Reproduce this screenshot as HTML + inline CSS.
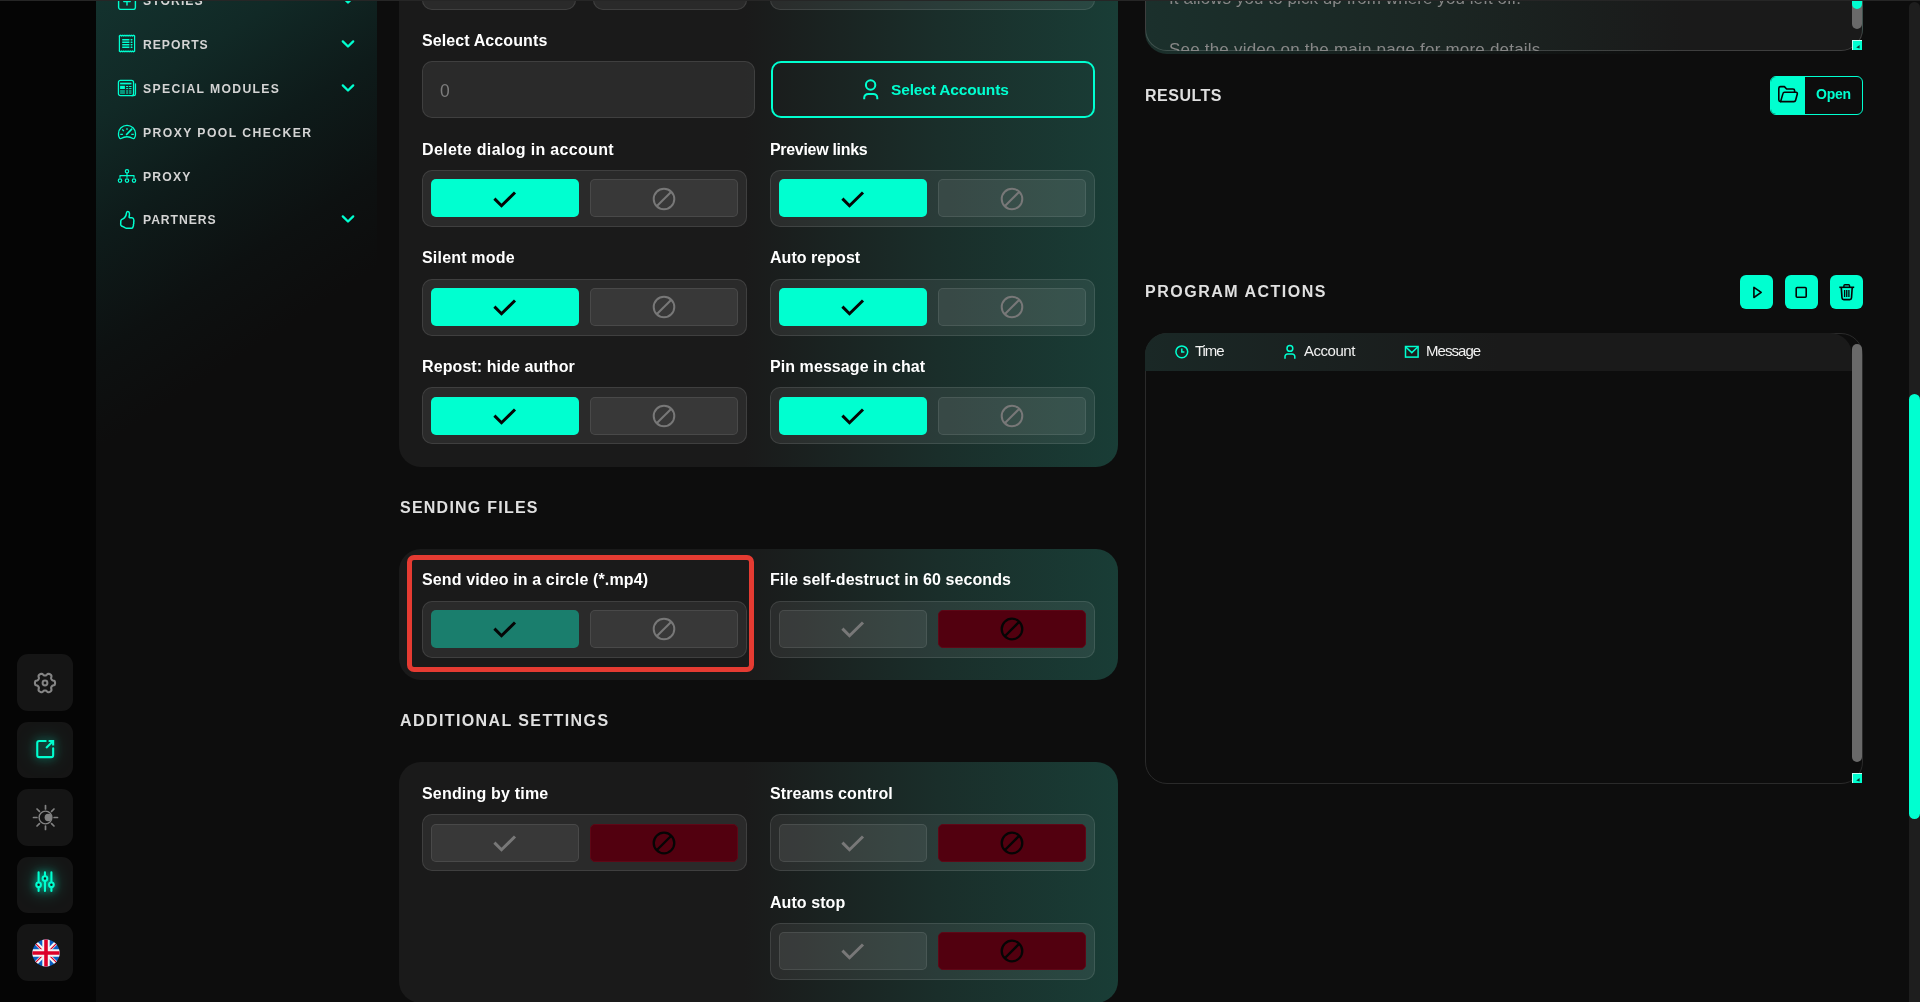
<!DOCTYPE html>
<html lang="en">
<head>
<meta charset="utf-8">
<title>Sender</title>
<style>
*{box-sizing:border-box;margin:0;padding:0}
html,body{width:1920px;height:1002px;overflow:hidden;background:#0d0d0d}
body{position:relative;font-family:"Liberation Sans",sans-serif;color:#fff}
.a{position:absolute}
.t{position:absolute;white-space:nowrap;will-change:transform}
#strip{left:0;top:0;width:96px;height:1002px;background:#050505}
#side{left:96px;top:0;width:281px;height:1002px;background:linear-gradient(147deg,#13322e 0%,#112926 10%,#0e1b1a 20%,#0d1111 30%,#0d0d0d 38%)}
#topline{left:0;top:0;width:1920px;height:1px;background:#262626;z-index:50}
.ibtn{left:17px;width:56px;height:57px;border-radius:11px;background:#151515;overflow:hidden}
.nav{font-weight:bold;font-size:12.2px;color:#d4d4d4;line-height:14px}
.panel{left:399px;width:719px;border-radius:22px;background:linear-gradient(90deg,#1a1a1a 0%,#1a1a1a 48%,#1a2e2a 75%,#193d36 100%)}
.lbl{font-weight:bold;font-size:16px;line-height:20px;color:#fff}
.sec{font-weight:bold;font-size:16px;line-height:18px;color:#e0e0e0}
.tg{width:325px;height:57px;border-radius:10px;border:1px solid rgba(255,255,255,.1);background:rgba(255,255,255,.07)}
.tb{position:absolute;top:8px;width:148px;height:38px;border-radius:5px}
.tb.l{left:8px}.tb.r{left:167px}
.tb svg{position:absolute;left:50%;top:50%}
.on{background:#00ffd0}
.dim{background:#1a7e6d}
.off{background:rgba(255,255,255,.065);border:1px solid rgba(255,255,255,.09)}
.red{background:#52000f;border:1px solid #5e0716}
.abtn{top:275px;width:33px;height:34px;border-radius:6px;background:#00ffd0}
.th{font-size:15px;line-height:18px;color:#f2f2f2}
</style>
</head>
<body>
<div id="strip" class="a"></div><div id="side" class="a"></div>
<main>
<div class="a panel" style="top:-40px;height:507px"></div>
<div class="a panel" style="top:549px;height:131px"></div>
<div class="a panel" style="top:762px;height:241px"></div>
<div class="a" style="left:422px;top:-40px;width:154px;height:50px;border-radius:10px;border:1px solid rgba(255,255,255,.1);background:rgba(255,255,255,.07)"></div>
<div class="a" style="left:593px;top:-40px;width:154px;height:50px;border-radius:10px;border:1px solid rgba(255,255,255,.1);background:rgba(255,255,255,.07)"></div>
<div class="a" style="left:770px;top:-40px;width:325px;height:50px;border-radius:10px;border:1px solid rgba(255,255,255,.1);background:rgba(255,255,255,.07)"></div>
<div class="t lbl" style="left:422px;top:31px;letter-spacing:0.101px;">Select Accounts</div>
<div class="a" style="left:422px;top:61px;width:333px;height:57px;border-radius:10px;border:1px solid rgba(255,255,255,.1);background:rgba(255,255,255,.07)"></div>
<div class="t" style="left:440px;top:81px;font-size:17.5px;line-height:20px;color:#7d7d7d">0</div>
<div class="a" style="left:771px;top:61px;width:324px;height:57px;border-radius:10px;border:2px solid #00ffd0"></div>
<div class="t " style="left:890.5px;top:80px;letter-spacing:-0.159px;font-weight:bold;font-size:15.5px;line-height:20px;color:#00ffd0">Select Accounts</div>
<svg class="a" style="left:859px;top:77px" width="24" height="24" viewBox="0 0 24 24" fill="none" stroke="#00ffd0" stroke-width="2"><circle cx="11.6" cy="8" r="4.7"/><path d="M5.2 22.3 V20.9 a4 4 0 0 1 4 -4 h5.1 a4 4 0 0 1 4 4 v1.4"/></svg>
<div class="t lbl" style="left:422px;top:140px;letter-spacing:0.329px;">Delete dialog in account</div>
<div class="t lbl" style="left:770px;top:140px;letter-spacing:-0.308px;">Preview links</div>
<div class="a tg" style="left:422px;top:170px"><div class="tb l on"><svg width="30" height="24" viewBox="0 0 30 24" style="margin:-11.2px 0 0 -15px"><path d="M4.4 11.6 L11.5 18.7 L25 5.5" fill="none" stroke="#050505" stroke-width="3.0" stroke-linecap="butt" stroke-linejoin="miter"/></svg></div><div class="tb r off"><svg width="26" height="26" viewBox="0 0 26 26" style="margin:-12.2px 0 0 -13px"><circle cx="13" cy="13" r="10.3" fill="none" stroke="#787878" stroke-width="2.0"/><path d="M5.7 20.3 L20.3 5.7" stroke="#787878" stroke-width="2.0"/></svg></div></div>
<div class="a tg" style="left:770px;top:170px"><div class="tb l on"><svg width="30" height="24" viewBox="0 0 30 24" style="margin:-11.2px 0 0 -15px"><path d="M4.4 11.6 L11.5 18.7 L25 5.5" fill="none" stroke="#050505" stroke-width="3.0" stroke-linecap="butt" stroke-linejoin="miter"/></svg></div><div class="tb r off"><svg width="26" height="26" viewBox="0 0 26 26" style="margin:-12.2px 0 0 -13px"><circle cx="13" cy="13" r="10.3" fill="none" stroke="#787878" stroke-width="2.0"/><path d="M5.7 20.3 L20.3 5.7" stroke="#787878" stroke-width="2.0"/></svg></div></div>
<div class="t lbl" style="left:422px;top:248px;letter-spacing:0.191px;">Silent mode</div>
<div class="t lbl" style="left:770px;top:248px;letter-spacing:0.042px;">Auto repost</div>
<div class="a tg" style="left:422px;top:279px"><div class="tb l on"><svg width="30" height="24" viewBox="0 0 30 24" style="margin:-11.9px 0 0 -15px"><path d="M4.4 11.6 L11.5 18.7 L25 5.5" fill="none" stroke="#050505" stroke-width="3.0" stroke-linecap="butt" stroke-linejoin="miter"/></svg></div><div class="tb r off"><svg width="26" height="26" viewBox="0 0 26 26" style="margin:-12.9px 0 0 -13px"><circle cx="13" cy="13" r="10.3" fill="none" stroke="#787878" stroke-width="2.0"/><path d="M5.7 20.3 L20.3 5.7" stroke="#787878" stroke-width="2.0"/></svg></div></div>
<div class="a tg" style="left:770px;top:279px"><div class="tb l on"><svg width="30" height="24" viewBox="0 0 30 24" style="margin:-11.9px 0 0 -15px"><path d="M4.4 11.6 L11.5 18.7 L25 5.5" fill="none" stroke="#050505" stroke-width="3.0" stroke-linecap="butt" stroke-linejoin="miter"/></svg></div><div class="tb r off"><svg width="26" height="26" viewBox="0 0 26 26" style="margin:-12.9px 0 0 -13px"><circle cx="13" cy="13" r="10.3" fill="none" stroke="#787878" stroke-width="2.0"/><path d="M5.7 20.3 L20.3 5.7" stroke="#787878" stroke-width="2.0"/></svg></div></div>
<div class="t lbl" style="left:422px;top:357px;letter-spacing:0.094px;">Repost: hide author</div>
<div class="t lbl" style="left:770px;top:357px;letter-spacing:0.07px;">Pin message in chat</div>
<div class="a tg" style="left:422px;top:387px"><div style="top:9px" class="tb l on"><svg width="30" height="24" viewBox="0 0 30 24" style="margin:-11.9px 0 0 -15px"><path d="M4.4 11.6 L11.5 18.7 L25 5.5" fill="none" stroke="#050505" stroke-width="3.0" stroke-linecap="butt" stroke-linejoin="miter"/></svg></div><div style="top:9px" class="tb r off"><svg width="26" height="26" viewBox="0 0 26 26" style="margin:-12.9px 0 0 -13px"><circle cx="13" cy="13" r="10.3" fill="none" stroke="#787878" stroke-width="2.0"/><path d="M5.7 20.3 L20.3 5.7" stroke="#787878" stroke-width="2.0"/></svg></div></div>
<div class="a tg" style="left:770px;top:387px"><div style="top:9px" class="tb l on"><svg width="30" height="24" viewBox="0 0 30 24" style="margin:-11.9px 0 0 -15px"><path d="M4.4 11.6 L11.5 18.7 L25 5.5" fill="none" stroke="#050505" stroke-width="3.0" stroke-linecap="butt" stroke-linejoin="miter"/></svg></div><div style="top:9px" class="tb r off"><svg width="26" height="26" viewBox="0 0 26 26" style="margin:-12.9px 0 0 -13px"><circle cx="13" cy="13" r="10.3" fill="none" stroke="#787878" stroke-width="2.0"/><path d="M5.7 20.3 L20.3 5.7" stroke="#787878" stroke-width="2.0"/></svg></div></div>
<div class="t sec" style="left:399.5px;top:499px;letter-spacing:1.234px;">SENDING FILES</div>
<div class="t lbl" style="left:422px;top:570px;letter-spacing:0.128px;">Send video in a circle (*.mp4)</div>
<div class="t lbl" style="left:770px;top:570px;letter-spacing:0.087px;">File self-destruct in 60 seconds</div>
<div class="a tg" style="left:422px;top:601px"><div class="tb l dim"><svg width="30" height="24" viewBox="0 0 30 24" style="margin:-11.9px 0 0 -15px"><path d="M4.4 11.6 L11.5 18.7 L25 5.5" fill="none" stroke="#050505" stroke-width="3.0" stroke-linecap="butt" stroke-linejoin="miter"/></svg></div><div class="tb r off"><svg width="26" height="26" viewBox="0 0 26 26" style="margin:-12.9px 0 0 -13px"><circle cx="13" cy="13" r="10.3" fill="none" stroke="#787878" stroke-width="2.0"/><path d="M5.7 20.3 L20.3 5.7" stroke="#787878" stroke-width="2.0"/></svg></div></div>
<div class="a tg" style="left:770px;top:601px"><div class="tb l off"><svg width="30" height="24" viewBox="0 0 30 24" style="margin:-11.9px 0 0 -15px"><path d="M4.4 11.6 L11.5 18.7 L25 5.5" fill="none" stroke="#787878" stroke-width="3.0" stroke-linecap="butt" stroke-linejoin="miter"/></svg></div><div class="tb r red"><svg width="26" height="26" viewBox="0 0 26 26" style="margin:-13.2px 0 0 -13px"><circle cx="13" cy="13" r="10.3" fill="none" stroke="#050505" stroke-width="2.3"/><path d="M5.7 20.3 L20.3 5.7" stroke="#050505" stroke-width="2.3"/></svg></div></div>
<div class="a" style="left:407px;top:555px;width:347px;height:117px;border:5px solid #e53b32;border-radius:7px"></div>
<div class="t sec" style="left:399.5px;top:712px;letter-spacing:1.404px;">ADDITIONAL SETTINGS</div>
<div class="t lbl" style="left:422px;top:784px;letter-spacing:0.187px;">Sending by time</div>
<div class="t lbl" style="left:770px;top:784px;letter-spacing:0.063px;">Streams control</div>
<div class="a tg" style="left:422px;top:814px"><div style="top:9px" class="tb l off"><svg width="30" height="24" viewBox="0 0 30 24" style="margin:-11.9px 0 0 -15px"><path d="M4.4 11.6 L11.5 18.7 L25 5.5" fill="none" stroke="#787878" stroke-width="3.0" stroke-linecap="butt" stroke-linejoin="miter"/></svg></div><div style="top:9px" class="tb r red"><svg width="26" height="26" viewBox="0 0 26 26" style="margin:-13.2px 0 0 -13px"><circle cx="13" cy="13" r="10.3" fill="none" stroke="#050505" stroke-width="2.3"/><path d="M5.7 20.3 L20.3 5.7" stroke="#050505" stroke-width="2.3"/></svg></div></div>
<div class="a tg" style="left:770px;top:814px"><div style="top:9px" class="tb l off"><svg width="30" height="24" viewBox="0 0 30 24" style="margin:-11.9px 0 0 -15px"><path d="M4.4 11.6 L11.5 18.7 L25 5.5" fill="none" stroke="#787878" stroke-width="3.0" stroke-linecap="butt" stroke-linejoin="miter"/></svg></div><div style="top:9px" class="tb r red"><svg width="26" height="26" viewBox="0 0 26 26" style="margin:-13.2px 0 0 -13px"><circle cx="13" cy="13" r="10.3" fill="none" stroke="#050505" stroke-width="2.3"/><path d="M5.7 20.3 L20.3 5.7" stroke="#050505" stroke-width="2.3"/></svg></div></div>
<div class="t lbl" style="left:770px;top:893px;letter-spacing:0.068px;">Auto stop</div>
<div class="a tg" style="left:770px;top:923px"><div class="tb l off"><svg width="30" height="24" viewBox="0 0 30 24" style="margin:-11.9px 0 0 -15px"><path d="M4.4 11.6 L11.5 18.7 L25 5.5" fill="none" stroke="#787878" stroke-width="3.0" stroke-linecap="butt" stroke-linejoin="miter"/></svg></div><div class="tb r red"><svg width="26" height="26" viewBox="0 0 26 26" style="margin:-13.2px 0 0 -13px"><circle cx="13" cy="13" r="10.3" fill="none" stroke="#050505" stroke-width="2.3"/><path d="M5.7 20.3 L20.3 5.7" stroke="#050505" stroke-width="2.3"/></svg></div></div>
</main>
<nav>
<div class="t nav" style="left:142.8px;top:-5.6px;letter-spacing:1.07px;">STORIES</div>
<svg class="a" style="left:339px;top:-6.3px" width="18" height="13" viewBox="0 0 18 13"><path d="M3.8 3.4 L9 8.5 L14.2 3.4" fill="none" stroke="#00ffd0" stroke-width="2.3" stroke-linecap="round" stroke-linejoin="round"/></svg>
<div class="t nav" style="left:142.8px;top:38.4px;letter-spacing:0.963px;">REPORTS</div>
<svg class="a" style="left:339px;top:37.7px" width="18" height="13" viewBox="0 0 18 13"><path d="M3.8 3.4 L9 8.5 L14.2 3.4" fill="none" stroke="#00ffd0" stroke-width="2.3" stroke-linecap="round" stroke-linejoin="round"/></svg>
<div class="t nav" style="left:142.8px;top:82.4px;letter-spacing:1.362px;">SPECIAL MODULES</div>
<svg class="a" style="left:339px;top:81.7px" width="18" height="13" viewBox="0 0 18 13"><path d="M3.8 3.4 L9 8.5 L14.2 3.4" fill="none" stroke="#00ffd0" stroke-width="2.3" stroke-linecap="round" stroke-linejoin="round"/></svg>
<div class="t nav" style="left:142.8px;top:126.4px;letter-spacing:1.423px;">PROXY POOL CHECKER</div>
<div class="t nav" style="left:142.8px;top:170.4px;letter-spacing:1.182px;">PROXY</div>
<div class="t nav" style="left:142.8px;top:213.4px;letter-spacing:0.923px;">PARTNERS</div>
<svg class="a" style="left:339px;top:212.7px" width="18" height="13" viewBox="0 0 18 13"><path d="M3.8 3.4 L9 8.5 L14.2 3.4" fill="none" stroke="#00ffd0" stroke-width="2.3" stroke-linecap="round" stroke-linejoin="round"/></svg>
<svg class="a" style="left:117px;top:-10px" width="20" height="20" viewBox="0 0 20 20" fill="none" stroke="#00ffd0" stroke-width="1.2" stroke-linecap="round" stroke-linejoin="round"><rect x="1.6" y="1.6" width="16.8" height="17.8" rx="2.2" stroke-width="1.4"/><path d="M10 6.5 v8.6 M6.8 11.5 h6.4" stroke-width="1.4"/></svg>
<svg class="a" style="left:117px;top:33.4px" width="20" height="20" viewBox="0 0 20 20" fill="none" stroke="#00ffd0" stroke-width="1.2" stroke-linecap="round" stroke-linejoin="round"><path d="M2.4 3 l.95 -.9 l.95 .9 l.95 -.9 l.95 .9 l.95 -.9 l.95 .9 l.95 -.9 l.95 .9 l.95 -.9 l.95 .9 l.95 -.9 l.95 .9 l.95 -.9 l.95 .9 l.95 -.9 l.95 .9"/><path d="M2.4 18 l.95 .9 l.95 -.9 l.95 .9 l.95 -.9 l.95 .9 l.95 -.9 l.95 .9 l.95 -.9 l.95 .9 l.95 -.9 l.95 .9 l.95 -.9 l.95 .9 l.95 -.9 l.95 .9 l.95 -.9"/><path d="M2.4 3 V18 M17.6 3 V18"/><path d="M5.2 6.7 h7.2 M5.2 9.2 h7.2 M5.2 11.7 h7.2 M5.2 14.2 h7.2" stroke-width="1.6" stroke-linecap="butt"/><path d="M14.2 6.7 h.7 M14.2 9.2 h.7 M14.2 11.7 h.7 M14.2 14.2 h.7" stroke-width="1.4"/></svg>
<svg class="a" style="left:117px;top:78px" width="20" height="20" viewBox="0 0 20 20" fill="none" stroke="#00ffd0" stroke-width="1.2" stroke-linecap="round" stroke-linejoin="round"><rect x="1.45" y="2.45" width="15.1" height="15.2" rx="2" stroke-width="1.3"/><path d="M18.45 5.8 V16 a1.7 1.7 0 0 1 -1.7 1.7 H15" stroke-width="1.3"/><g stroke="none" fill="#00ffd0"><rect x="3.1" y="4.7" width="11.4" height="1.7"/><rect x="3.1" y="7.8" width="4.8" height="3.2"/><rect x="3.1" y="12" width="4.8" height="4" opacity=".5"/><rect x="9.1" y="8" width="2.1" height="1"/><rect x="12.1" y="8" width="2.4" height="1"/><rect x="9.1" y="10.1" width="2.1" height="1"/><rect x="12.1" y="10.1" width="2.4" height="1"/><rect x="9.1" y="12" width="2.1" height="4" opacity=".5"/><rect x="12.1" y="12" width="2.4" height="4" opacity=".5"/></g></svg>
<svg class="a" style="left:117px;top:122px" width="20" height="20" viewBox="0 0 20 20" fill="none" stroke="#00ffd0" stroke-width="1.2" stroke-linecap="round" stroke-linejoin="round"><path d="M2.6 16.2 C1.2 14 1.4 12.2 1.5 11.6 A8.5 8.2 0 0 1 18.5 11.6 C18.6 12.2 18.8 14 17.4 16.2 C17 16.8 16.4 16.7 16 16.5 C12 14.2 8 14.2 4 16.5 C3.6 16.7 3 16.8 2.6 16.2 Z" stroke-width="1.3"/><path d="M9.6 12.5 L14.7 7.1" stroke-width="1.7"/><path d="M10 6.3 V7.7" stroke-width="1.5" stroke-linecap="butt"/><path d="M5.3 7.4 L6.8 9.1 M3.3 12.4 H5.9 M14.3 12.4 H16.8" stroke-width="1.4" stroke-linecap="butt"/></svg>
<svg class="a" style="left:117px;top:166px" width="20" height="20" viewBox="0 0 20 20" fill="none" stroke="#00ffd0" stroke-width="1.2" stroke-linecap="round" stroke-linejoin="round"><circle cx="10" cy="5.3" r="1.7"/><path d="M10 7 v2.6 M3 11.3 v-1.7 h14 v1.7 M10 9.6 v1.7"/><circle cx="3" cy="14.6" r="1.7"/><circle cx="10" cy="14.6" r="1.7"/><circle cx="17" cy="14.6" r="1.7"/></svg>
<svg class="a" style="left:117px;top:210px" width="20" height="20" viewBox="0 0 20 20" fill="none" stroke="#00ffd0" stroke-width="1.2" stroke-linecap="round" stroke-linejoin="round"><path d="M10.6 1.4 C9.8 1.4 9.5 2.2 9.4 3.4 C9.3 5 8.8 6.4 7.6 7.6 C6.8 8.4 5.8 9 4.9 9.4 C4.1 9.8 3.8 10.2 3.8 11 L3.7 14.6 C3.7 15.4 4 15.7 4.6 16 L7 17.2 C7.8 17.8 8.4 18.2 9.2 18.2 L14.6 18.2 C15.4 18.2 15.9 17.6 16 16.8 C16.5 16.2 16.6 15.4 16.4 14.6 C16.8 13.8 16.9 13 16.7 12.2 C17 11.4 17 10.4 16.7 9.4 C16.5 8.4 16 7.8 15 7.7 L12.6 7.7 C12.2 7.7 12.1 7.4 12.1 7 C12.4 5.6 12.6 4.4 12.4 3.2 C12.2 2 11.6 1.4 10.6 1.4 Z" stroke-width="1.5"/></svg>
</nav>
<aside>
<div class="a ibtn" style="top:654px;height:57px"><svg class="a" style="left:16.3px;top:17px" width="24" height="24" viewBox="0 0 24 24" fill="none" stroke="#858585" stroke-width="2.1" stroke-linejoin="round"><path d="M22.05 12.00 L22.03 12.53 L21.95 13.05 L21.79 13.55 L21.45 14.01 L20.79 14.36 L19.97 14.59 L19.35 14.82 L18.98 15.11 L18.73 15.43 L18.52 15.76 L18.33 16.11 L18.18 16.49 L18.11 16.95 L18.22 17.60 L18.44 18.44 L18.46 19.18 L18.24 19.71 L17.88 20.10 L17.47 20.42 L17.03 20.70 L16.56 20.95 L16.07 21.14 L15.55 21.26 L14.99 21.19 L14.36 20.79 L13.74 20.19 L13.23 19.77 L12.80 19.60 L12.40 19.54 L12.00 19.53 L11.60 19.54 L11.20 19.60 L10.77 19.77 L10.26 20.19 L9.64 20.79 L9.01 21.19 L8.45 21.26 L7.93 21.14 L7.44 20.95 L6.98 20.70 L6.53 20.42 L6.12 20.10 L5.76 19.71 L5.54 19.18 L5.56 18.44 L5.78 17.60 L5.89 16.95 L5.82 16.49 L5.67 16.11 L5.48 15.76 L5.27 15.43 L5.02 15.11 L4.65 14.82 L4.03 14.59 L3.21 14.36 L2.55 14.01 L2.21 13.55 L2.05 13.05 L1.97 12.53 L1.95 12.00 L1.97 11.47 L2.05 10.95 L2.21 10.45 L2.55 9.99 L3.21 9.64 L4.03 9.41 L4.65 9.18 L5.02 8.89 L5.27 8.57 L5.48 8.24 L5.67 7.89 L5.82 7.51 L5.89 7.05 L5.78 6.40 L5.56 5.56 L5.54 4.82 L5.76 4.29 L6.12 3.90 L6.53 3.58 L6.97 3.30 L7.44 3.05 L7.93 2.86 L8.45 2.74 L9.01 2.81 L9.64 3.21 L10.26 3.81 L10.77 4.23 L11.20 4.40 L11.60 4.46 L12.00 4.47 L12.40 4.46 L12.80 4.40 L13.23 4.23 L13.74 3.81 L14.36 3.21 L14.99 2.81 L15.55 2.74 L16.07 2.86 L16.56 3.05 L17.03 3.30 L17.47 3.58 L17.88 3.90 L18.24 4.29 L18.46 4.82 L18.44 5.56 L18.22 6.40 L18.11 7.05 L18.18 7.51 L18.33 7.89 L18.52 8.24 L18.73 8.57 L18.98 8.89 L19.35 9.18 L19.97 9.41 L20.79 9.64 L21.45 9.99 L21.79 10.45 L21.95 10.95 L22.03 11.47 Z"/><circle cx="12" cy="12" r="2.4" stroke-width="2"/></svg></div>
<div class="a ibtn" style="top:722px;height:56px"><svg class="a" style="filter:drop-shadow(0 0 4px rgba(0,255,208,0.5)) drop-shadow(0 0 9px rgba(0,255,208,0.3));left:0;top:0" width="56" height="56" viewBox="0 0 56 56" fill="none" stroke="#00ffd0" stroke-width="2.1" stroke-linecap="round"><path d="M28.7 19.05 H22.25 a2 2 0 0 0 -2 2 V33.15 a2 2 0 0 0 2 2 H34.15 a2 2 0 0 0 2 -2 V26.2"/><path d="M29.1 26.1 L35.6 19.6" stroke-linecap="butt"/><path d="M31.6 19.05 H36.15 V23.6" stroke-linecap="butt" stroke-linejoin="miter"/></svg></div>
<div class="a ibtn" style="top:789px;height:57px"><svg class="a" style="left:15.05px;top:15.05px" width="27" height="27" viewBox="0 0 27 27" fill="none" stroke="#828282" stroke-width="1.7" stroke-linecap="round"><circle cx="13.5" cy="13.5" r="6.4" stroke-width="1.4"/><circle cx="16.3" cy="13.5" r="3.7" fill="#828282" stroke="none"/><path d="M22.10 13.50 L25.50 13.50 M19.58 19.58 L21.99 21.99 M13.50 22.10 L13.50 25.50 M7.42 19.58 L5.01 21.99 M4.90 13.50 L1.50 13.50 M7.42 7.42 L5.01 5.01 M13.50 4.90 L13.50 1.50 M19.58 7.42 L21.99 5.01 "/></svg></div>
<div class="a ibtn" style="top:857px;height:56px"><svg class="a" style="filter:drop-shadow(0 0 4px rgba(0,255,208,0.75)) drop-shadow(0 0 9px rgba(0,255,208,0.35));left:0;top:0" width="56" height="56" viewBox="0 0 56 56" fill="none" stroke="#00ffd0" stroke-width="2.1" stroke-linecap="round"><path d="M21.6 15.2 V33.9 M27.95 15.2 V33.9 M34.4 15.2 V33.9"/><circle cx="21.6" cy="27.85" r="2.3" fill="#10201d"/><circle cx="27.95" cy="21.5" r="2.3" fill="#10201d"/><circle cx="34.4" cy="27.85" r="2.3" fill="#10201d"/></svg></div>
<div class="a ibtn" style="top:924px;height:57px"><svg class="a" style="left:14.9px;top:15px" width="28" height="28" viewBox="0 0 28 28"><defs><clipPath id="fc"><circle cx="14" cy="14" r="13.6"/></clipPath></defs><g clip-path="url(#fc)"><rect width="28" height="28" fill="#0b5ec2"/><path d="M0 0 L28 28 M28 0 L0 28" stroke="#f4f4f4" stroke-width="4"/><path d="M-1 0 L13 14 M29 0 L15 14 M-1 28 L13 14 M29 28 L15 14" stroke="#dc0029" stroke-width="1.2" transform="translate(0 0)"/><path d="M14 0 V28 M0 14 H28" stroke="#f4f4f4" stroke-width="7.4"/><path d="M14 0 V28 M0 14 H28" stroke="#dc0029" stroke-width="3.6"/></g></svg></div>
</aside>
<section>
<div class="a" style="left:1145px;top:-40px;width:718px;height:93.5px;border-radius:22px;background:linear-gradient(90deg,#1b302c 0%,rgba(27,38,35,.6) 40%,rgba(26,26,26,0) 75%)"></div>
<div class="a" style="left:1145px;top:-40px;width:718px;height:91px;border-radius:22px;border:1px solid rgba(255,255,255,.16);background:linear-gradient(90deg,#1b302c 0%,#1b2623 40%,#1a1a1a 75%);overflow:hidden"></div>
<div class="t " style="left:1168.7px;top:-14.5px;letter-spacing:0.078px;font-size:17px;line-height:25.5px;color:#878787">It allows you to pick up from where you left off.</div>
<div class="a" style="left:1160px;top:38px;width:400px;height:12.5px;overflow:hidden"><div class="t " style="left:8.7px;top:-1.5px;letter-spacing:0.203px;font-size:17px;line-height:25.5px;color:#878787">See the video on the main page for more details</div></div>
<div class="a" style="left:1852px;top:-10px;width:10px;height:39px;border-radius:5px;background:#696969"></div>
<div class="a" style="left:1852px;top:-10px;width:10px;height:19px;border-radius:5px;background:#00ffd0"></div>
<div class="a" style="left:1852px;top:40px;width:10px;height:10px;background:#00ffd0;box-shadow:inset 1px 1px 0 rgba(255,255,255,.75)"><svg class="a" style="left:0;top:0" width="10" height="10" viewBox="0 0 10 10"><path d="M4.2 7.4 L7.6 5 V8.6 Z" fill="#0b3b33"/></svg></div>
<div class="t sec" style="left:1145px;top:87px;letter-spacing:0.503px;">RESULTS</div>
<div class="a" style="left:1770px;top:76px;width:93px;height:39px;border-radius:6px;border:1px solid #00ffd0;overflow:hidden"><div class="a" style="left:-1px;top:-1px;width:35px;height:39px;background:#00ffd0"></div></div>
<svg class="a" style="left:1776px;top:82px" width="24" height="24" viewBox="0 0 24 24" fill="none" stroke="#050505" stroke-width="1.6" stroke-linejoin="round" stroke-linecap="round"><path d="M4.6 19.6 H4.4 A1.8 1.8 0 0 1 2.8 17.8 V6.4 A1.8 1.8 0 0 1 4.6 4.6 H8.4 L10.6 7 H17 A1.6 1.6 0 0 1 18.6 8.6 V10"/><path d="M4.6 19.6 L7 11.4 A1.6 1.6 0 0 1 8.5 10.2 H20 A1.4 1.4 0 0 1 21.3 12 L19.6 18.2 A1.8 1.8 0 0 1 17.8 19.6 Z"/></svg>
<div class="t " style="left:1816.3px;top:85px;letter-spacing:-0.26px;font-weight:bold;font-size:14px;line-height:18px;color:#00ffd0">Open</div>
<div class="t sec" style="left:1145px;top:283px;letter-spacing:1.507px;">PROGRAM ACTIONS</div>
<div class="a abtn" style="left:1740px"><svg class="a" style="left:0;top:0" width="33" height="34" viewBox="0 0 33 34"><path d="M13.9 12.4 V22.5 L21.2 17.45 Z" fill="none" stroke="#050505" stroke-width="1.6" stroke-linejoin="round"/></svg></div>
<div class="a abtn" style="left:1785px"><svg class="a" style="left:0;top:0" width="33" height="34" viewBox="0 0 33 34"><rect x="11.2" y="12.5" width="10" height="9.8" rx="1" fill="none" stroke="#050505" stroke-width="1.6"/></svg></div>
<div class="a abtn" style="left:1830px"><svg class="a" style="left:0;top:0" width="33" height="34" viewBox="0 0 33 34" fill="none" stroke="#050505" stroke-width="1.6" stroke-linejoin="round"><path d="M9.3 12.3 H24.2"/><path d="M13.9 12 V10.7 a1 1 0 0 1 1 -1 H18.6 a1 1 0 0 1 1 1 V12" stroke-width="1.4"/><path d="M11.3 12.6 L12 22.9 a1.8 1.8 0 0 0 1.8 1.7 H19.7 a1.8 1.8 0 0 0 1.8 -1.7 L22.2 12.6"/><path d="M14.6 15 V22 M16.75 15 V22 M18.9 15 V22" stroke-width="1.3"/></svg></div>
<div class="a" style="left:1145px;top:333px;width:718px;height:451px;border-radius:22px;border:1px solid #2a2a2a"></div>
<div class="a" style="left:1145px;top:333px;width:707px;height:38px;border-radius:22px 22px 0 0;background:linear-gradient(90deg,#1a2826 0%,#1a2120 25%,#1a1a1a 50%)"></div>
<svg class="a" style="left:1173px;top:343px" width="18" height="18" viewBox="0 0 18 18" fill="none" stroke="#00ffd0" stroke-width="1.5"><circle cx="8.8" cy="8.8" r="5.9"/><path d="M8.8 5.4 V9 H11.4"/></svg>
<div class="t th" style="left:1195.4px;top:342px;letter-spacing:-1.06px;">Time</div>
<svg class="a" style="left:1281px;top:343px" width="18" height="18" viewBox="0 0 18 18" fill="none" stroke="#00ffd0" stroke-width="1.5"><circle cx="8.9" cy="5.4" r="2.9"/><path d="M4 15.8 v-2.2 a2.6 2.6 0 0 1 2.6 -2.6 h4.6 a2.6 2.6 0 0 1 2.6 2.6 v2.2"/></svg>
<div class="t th" style="left:1303.8px;top:342px;letter-spacing:-0.467px;">Account</div>
<svg class="a" style="left:1403px;top:343px" width="18" height="18" viewBox="0 0 18 18" fill="none" stroke="#00ffd0" stroke-width="1.5"><rect x="2.5" y="3.5" width="12.6" height="10.6"/><path d="M2.8 4 L8.8 9.6 L14.8 4"/></svg>
<div class="t th" style="left:1425.6px;top:342px;letter-spacing:-0.946px;">Message</div>
<div class="a" style="left:1852px;top:343.5px;width:10px;height:418.5px;border-radius:5px;background:#696969"></div>
<div class="a" style="left:1852px;top:773px;width:10px;height:10px;background:#00ffd0;box-shadow:inset 1px 1px 0 rgba(255,255,255,.75)"><svg class="a" style="left:0;top:0" width="10" height="10" viewBox="0 0 10 10"><path d="M4.2 7.4 L7.6 5 V8.6 Z" fill="#0b3b33"/></svg></div>
</section>
<div class="a" style="left:1909px;top:2px;width:11px;height:1010px;border-radius:5.5px;background:#1e1e1e"></div>
<div class="a" style="left:1909px;top:393.5px;width:11px;height:425.5px;border-radius:5.5px;background:#00ffd0"></div>
<div id="topline" class="a"></div>
</body>
</html>
